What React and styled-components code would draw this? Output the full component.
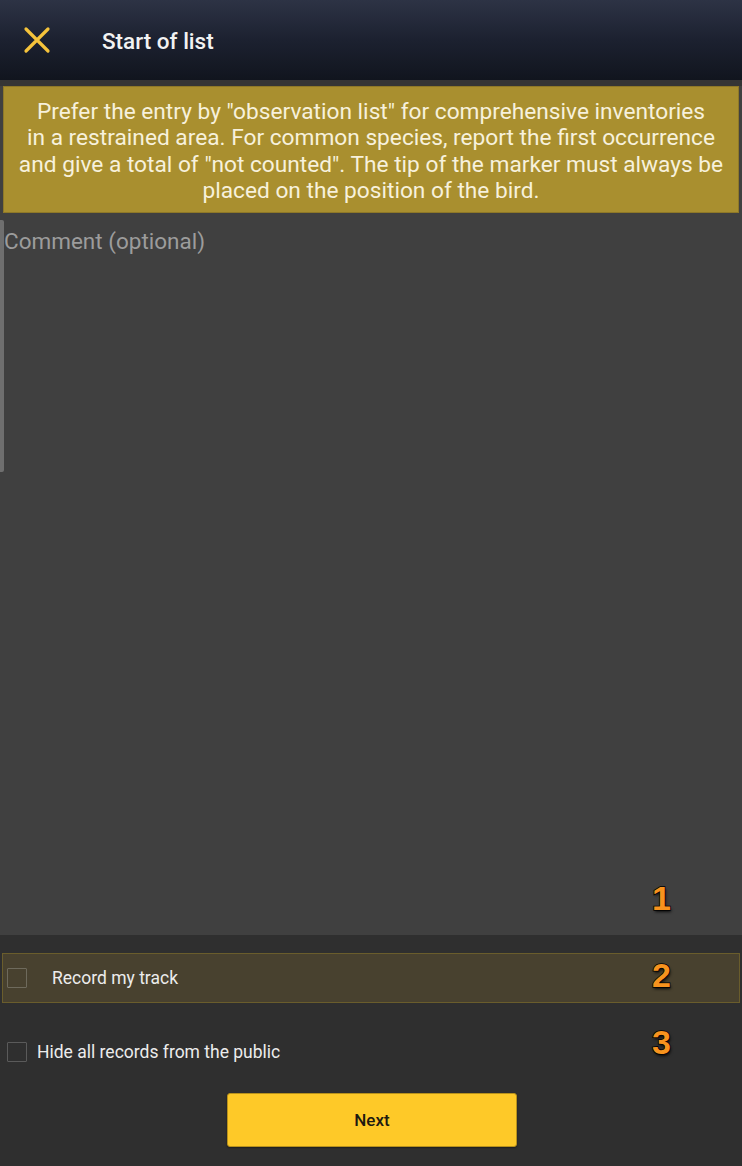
import React, { useState } from 'react';
import styled, { createGlobalStyle } from 'styled-components';

const GlobalStyle = createGlobalStyle`
  html, body {
    margin: 0;
    padding: 0;
    background: #2f2f2f;
  }
  * {
    box-sizing: border-box;
  }
`;

const StyledPage = styled.div`
  position: relative;
  width: 742px;
  height: 1166px;
  display: flex;
  flex-direction: column;
  font-family: Roboto, 'Noto Sans', sans-serif;
  overflow: hidden;
`;

const StyledHeader = styled.header`
  height: 80px;
  flex-shrink: 0;
  display: flex;
  align-items: center;
  padding-left: 23px;
  background: linear-gradient(to bottom, #2d3345 0%, #1c2130 50%, #11151e 100%);
`;

const StyledCloseButton = styled.button`
  width: 28px;
  height: 28px;
  padding: 0;
  border: none;
  background: transparent;
  display: flex;
  align-items: center;
  justify-content: center;
  cursor: pointer;
`;

const StyledTitle = styled.h1`
  margin: 2px 0 0 51px;
  font-size: 22.5px;
  font-weight: 500;
  color: #f2f2f2;
`;

const StyledMain = styled.main`
  flex: 1;
  display: flex;
  flex-direction: column;
  background: #404040;
  border-top: 6px solid #353535;
`;

const StyledBanner = styled.div`
  margin: 0 3px;
  height: 127px;
  display: flex;
  align-items: center;
  justify-content: center;
  background: #a98f2f;
  border: 1px solid #8e7828;
  color: #f7f1dc;
  font-size: 22.7px;
  line-height: 26.2px;
  text-align: center;
  padding: 4px 0 0;
  white-space: nowrap;
`;

const StyledCommentField = styled.div`
  position: relative;
  flex: 1;
  padding: 15px 4px;
  font-size: 22.5px;
  color: #9c9c9c;
`;

const StyledScrollbar = styled.div`
  position: absolute;
  left: 0;
  top: 7px;
  width: 4px;
  height: 252px;
  border-radius: 0 2px 2px 0;
  background: #6f6f6f;
`;

const StyledFooter = styled.footer`
  height: 231px;
  flex-shrink: 0;
  display: flex;
  flex-direction: column;
  background: #2f2f2f;
  padding-top: 18px;
`;

const StyledOption = styled.label`
  display: flex;
  align-items: center;
  height: ${({ highlighted }) => (highlighted ? '50px' : '48px')};
  margin: 0 2px;
  padding-left: 4px;
  background: ${({ highlighted }) => (highlighted ? '#48412f' : 'transparent')};
  border: 1px solid ${({ highlighted }) => (highlighted ? '#6a5d2c' : 'transparent')};
  color: #ececec;
  font-size: 17.5px;
  cursor: pointer;
`;

const StyledCheckbox = styled.span`
  width: 20px;
  height: 20px;
  flex-shrink: 0;
  border: 1.5px solid ${({ highlighted }) => (highlighted ? '#6e6a5c' : '#5a5a5a')};
  border-radius: 1px;
  margin-right: ${({ gap }) => gap}px;
  background: ${({ checked }) => (checked ? '#fec928' : 'transparent')};
`;

const StyledSpacer = styled.div`
  height: ${({ size }) => size}px;
`;

const StyledButtonRow = styled.div`
  display: flex;
  justify-content: center;
  padding-top: 17px;
  padding-left: 2px;
`;

const StyledNextButton = styled.button`
  width: 290px;
  height: 54px;
  background: #fec928;
  border: 1px solid #b8911c;
  border-radius: 3px;
  box-shadow: 0 1px 2px rgba(0, 0, 0, 0.4);
  font-family: Roboto, 'Noto Sans', sans-serif;
  font-size: 17px;
  font-weight: 500;
  color: #1e1a10;
  cursor: pointer;
`;

const StyledMarker = styled.span`
  position: absolute;
  left: 652px;
  top: ${({ top }) => top}px;
  font-family: 'Liberation Sans', Arial, sans-serif;
  font-size: 34px;
  font-weight: 700;
  color: #f7931e;
  -webkit-text-stroke: 1.5px #000;
  paint-order: stroke fill;
  text-shadow: 1px 2px 3px rgba(0, 0, 0, 0.8);
`;

const CloseIcon = () => (
  <svg width="28" height="28" viewBox="0 0 28 28">
    <path d="M3 3 L25 25 M25 3 L3 25" stroke="#f5c33b" strokeWidth="3.2" strokeLinecap="round" />
  </svg>
);

const Option = ({ label, highlighted, gap, checked, onToggle }) => (
  <StyledOption highlighted={highlighted} onClick={onToggle}>
    <StyledCheckbox highlighted={highlighted} gap={gap} checked={checked} />
    {label}
  </StyledOption>
);

const App = () => {
  const [recordTrack, setRecordTrack] = useState(false);
  const [hideRecords, setHideRecords] = useState(false);
  return (
    <StyledPage>
      <GlobalStyle />
      <StyledHeader>
        <StyledCloseButton aria-label="Close">
          <CloseIcon />
        </StyledCloseButton>
        <StyledTitle>Start of list</StyledTitle>
      </StyledHeader>
      <StyledMain>
        <StyledBanner>
          <div>
            Prefer the entry by "observation list" for comprehensive inventories
            <br />
            in a restrained area. For common species, report the first occurrence
            <br />
            and give a total of "not counted". The tip of the marker must always be
            <br />
            placed on the position of the bird.
          </div>
        </StyledBanner>
        <StyledCommentField>
          <StyledScrollbar />
          Comment (optional)
        </StyledCommentField>
      </StyledMain>
      <StyledFooter>
        <Option
          highlighted
          gap={25}
          label="Record my track"
          checked={recordTrack}
          onToggle={() => setRecordTrack(!recordTrack)}
        />
        <StyledSpacer size={25} />
        <Option
          gap={10}
          label="Hide all records from the public"
          checked={hideRecords}
          onToggle={() => setHideRecords(!hideRecords)}
        />
        <StyledButtonRow>
          <StyledNextButton>Next</StyledNextButton>
        </StyledButtonRow>
      </StyledFooter>
      <StyledMarker top={879}>1</StyledMarker>
      <StyledMarker top={956}>2</StyledMarker>
      <StyledMarker top={1023}>3</StyledMarker>
    </StyledPage>
  );
};

export default App;
